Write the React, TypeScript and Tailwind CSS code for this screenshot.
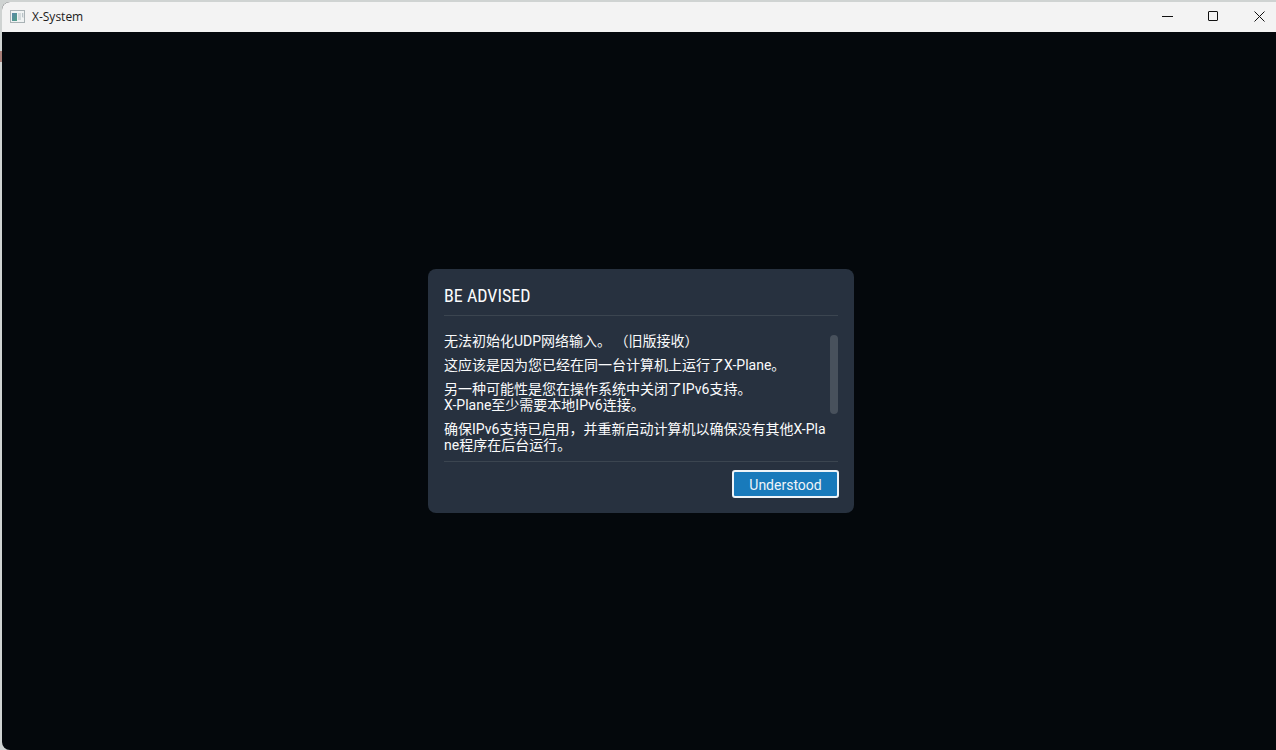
import type { ReactNode } from 'react'

const MESSAGES: string[][] = [
  ['无法初始化UDP网络输入。 （旧版接收）'],
  ['这应该是因为您已经在同一台计算机上运行了X-Plane。'],
  ['另一种可能性是您在操作系统中关闭了IPv6支持。', 'X-Plane至少需要本地IPv6连接。'],
  ['确保IPv6支持已启用，并重新启动计算机以确保没有其他X-Plane程序在后台运行。'],
]

function AppIcon() {
  return (
    <svg width="16" height="14" viewBox="0 0 16 14" aria-hidden="true">
      <defs>
        <linearGradient id="pane" x1="0" y1="0" x2="1" y2="1">
          <stop offset="0" stopColor="#5a87a8" />
          <stop offset="1" stopColor="#4f9f86" />
        </linearGradient>
      </defs>
      <rect x="0.5" y="0.5" width="14" height="12" fill="#f0f3f3" stroke="#a9b2b5" />
      <rect x="2" y="3" width="5" height="8" fill="url(#pane)" />
      <rect x="8" y="3" width="3" height="7" fill="#d3dadc" />
      <rect x="12" y="3" width="2" height="5" fill="#dfe4e6" />
      <path d="M12.5 3v4" stroke="#b9c3c7" />
    </svg>
  )
}

function CaptionButton({ label, children }: { label: string; children: ReactNode }) {
  return (
    <button aria-label={label} className="flex h-full w-[46px] items-center justify-center hover:bg-gray-200">
      <svg width="11" height="11" viewBox="0 0 11 11" fill="none" stroke="#111111" aria-hidden="true">
        {children}
      </svg>
    </button>
  )
}

function TitleBar() {
  return (
    <header className="flex h-[30px] items-center justify-between bg-[#f3f3f3] pl-2">
      <div className="flex items-center gap-1.5">
        <AppIcon />
        <h1 className="font-['Open_Sans','Noto_Sans',sans-serif] text-xs text-[#1b1b1b]">X-System</h1>
      </div>
      <div className="-mr-1.5 flex h-full pb-0.5">
        <CaptionButton label="Minimize">
          <path d="M0 5.5h11" />
        </CaptionButton>
        <CaptionButton label="Maximize">
          <rect x="0.5" y="0.5" width="9" height="9" rx="0.5" />
        </CaptionButton>
        <CaptionButton label="Close">
          <path d="M0.5 0.5l10 10M10.5 0.5l-10 10" />
        </CaptionButton>
      </div>
    </header>
  )
}

function AdvisoryDialog() {
  return (
    <section
      role="alertdialog"
      aria-labelledby="advisory-title"
      className="w-[426px] rounded-lg bg-[#27313f] px-4 pt-4 pb-[15px] font-['Roboto','Noto_Sans_CJK_SC',sans-serif] text-[#fafbfc]"
    >
      <h2
        id="advisory-title"
        className="border-b border-[#3b4550] pb-2 font-['Roboto_Condensed','Liberation_Sans_Narrow','Roboto',sans-serif] text-lg leading-[22px]"
      >
        BE ADVISED
      </h2>
      <div className="flex border-b border-[#3b4550] pt-[17px] pb-2">
        <div className="flex flex-1 flex-col gap-2 text-sm leading-4 break-all">
          {MESSAGES.map((lines) => (
            <div key={lines[0]}>
              {lines.map((line) => (
                <p key={line}>{line}</p>
              ))}
            </div>
          ))}
        </div>
        <div className="mt-0.5 ml-0.5 h-[79px] w-2 rounded-full bg-[#48515c]" />
      </div>
      <div className="mt-2 -mr-px flex justify-end">
        <button className="h-7 w-[107px] rounded-[3px] border-2 border-[#eef4f8] bg-[#187abb] pt-px text-sm text-[#eef4f8]">
          Understood
        </button>
      </div>
    </section>
  )
}

export default function App() {
  return (
    <div className="relative flex min-h-screen flex-col bg-[#cfd3d2] pt-[2px] pl-[2px]">
      {/* sliver of the window behind */}
      <div className="absolute top-[51px] left-0 h-[11px] w-[2px] bg-[#a87f78]" />
      <div className="flex flex-1 flex-col overflow-hidden rounded-l-lg bg-[#04080c]">
        <TitleBar />
        <main className="flex flex-1 items-center justify-center pl-1">
          <AdvisoryDialog />
        </main>
      </div>
    </div>
  )
}
